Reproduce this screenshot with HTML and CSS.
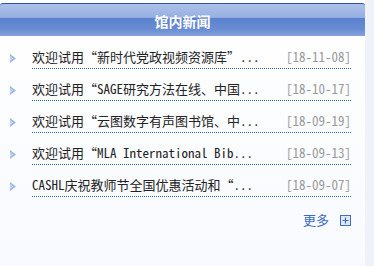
FILE: index.html
```html
<!DOCTYPE html>
<html lang="zh-CN">
<head>
    <meta charset="UTF-8">
    <title>馆内新闻</title>
    <link rel="stylesheet" href="styles.css">
</head>
<body>
    <div class="panel">
        <div class="panel-head">馆内新闻</div>

        <ul class="news">
            <li>
                <span class="bullet"><svg width="6" height="9" viewBox="0 0 6 9"><polygon points="0,0 6,4.5 0,9" fill="#9db7e4"/><polygon points="0,2 3.5,4.5 0,7" fill="#c6d6f1"/></svg></span>
                <a class="line" href="#"><span class="title">欢迎试用“新时代党政视频资源库”...</span><span class="date">[18-11-08]</span></a>
            </li>
            <li>
                <span class="bullet"><svg width="6" height="9" viewBox="0 0 6 9"><polygon points="0,0 6,4.5 0,9" fill="#9db7e4"/><polygon points="0,2 3.5,4.5 0,7" fill="#c6d6f1"/></svg></span>
                <a class="line" href="#"><span class="title">欢迎试用“SAGE研究方法在线、中国...</span><span class="date">[18-10-17]</span></a>
            </li>
            <li>
                <span class="bullet"><svg width="6" height="9" viewBox="0 0 6 9"><polygon points="0,0 6,4.5 0,9" fill="#9db7e4"/><polygon points="0,2 3.5,4.5 0,7" fill="#c6d6f1"/></svg></span>
                <a class="line" href="#"><span class="title">欢迎试用“云图数字有声图书馆、中...</span><span class="date">[18-09-19]</span></a>
            </li>
            <li>
                <span class="bullet"><svg width="6" height="9" viewBox="0 0 6 9"><polygon points="0,0 6,4.5 0,9" fill="#9db7e4"/><polygon points="0,2 3.5,4.5 0,7" fill="#c6d6f1"/></svg></span>
                <a class="line" href="#"><span class="title">欢迎试用“MLA International Bib...</span><span class="date">[18-09-13]</span></a>
            </li>
            <li>
                <span class="bullet"><svg width="6" height="9" viewBox="0 0 6 9"><polygon points="0,0 6,4.5 0,9" fill="#9db7e4"/><polygon points="0,2 3.5,4.5 0,7" fill="#c6d6f1"/></svg></span>
                <a class="line" href="#"><span class="title">CASHL庆祝教师节全国优惠活动和“...</span><span class="date">[18-09-07]</span></a>
            </li>
        </ul>

        <div class="more">
            <a href="#">更多</a>
            <svg width="11" height="11" viewBox="0 0 11 11"><rect x="0.5" y="0.5" width="10" height="10" fill="#dfe8f7" stroke="#3f6fbf"/><path d="M5.5 2.5v6M2.5 5.5h6" stroke="#3f6fbf" stroke-width="1.2"/></svg>
        </div>
    </div>
</body>
</html>
```

FILE: styles.css
```css
body {
    margin: 0;
    background-color: #eff2f8;
    font-family: "Noto Sans Mono CJK SC", "Noto Sans CJK SC", monospace;
    font-size: 13px;
    color: #222;
}

.panel {
    width: 365px;
    height: 266px;
    padding-top: 3px;
    box-sizing: border-box;
    background: linear-gradient(#ffffff, #f8faff);
}

.panel-head {
    height: 32px;
    line-height: 34px;
    border-top: 1px solid #2b51a8;
    border-radius: 3px 3px 0 0;
    background: linear-gradient(#adc1e8 0%, #97afe2 42%, #5a81cf 44%, #6a8dd4 80%, #86a3de 100%);
    color: #fff;
    font-size: 14px;
    font-weight: bold;
    text-align: center;
    letter-spacing: 0;
}

.news {
    list-style: none;
    margin: 13px 0 0;
    padding: 0 14px 0 0;
}

.news li {
    display: flex;
    align-items: flex-end;
    margin-bottom: 12px;
}

.bullet {
    width: 32px;
    height: 16px;
    display: flex;
    align-items: center;
    padding-left: 10px;
    box-sizing: border-box;
    margin-bottom: 3px;
}

.bullet svg {
    display: block;
}

.line {
    flex: 1;
    display: flex;
    justify-content: space-between;
    line-height: 16px;
    padding-bottom: 3px;
    border-bottom: 1px dotted #2a62d4;
    color: #222;
    text-decoration: none;
}

.date {
    color: #999;
}

.more {
    display: flex;
    justify-content: flex-end;
    align-items: center;
    gap: 11px;
    margin-top: 15px;
    padding-right: 14px;
}

.more a {
    color: #3a6cc4;
    text-decoration: none;
    line-height: 16px;
}

.more svg {
    display: block;
}
```
